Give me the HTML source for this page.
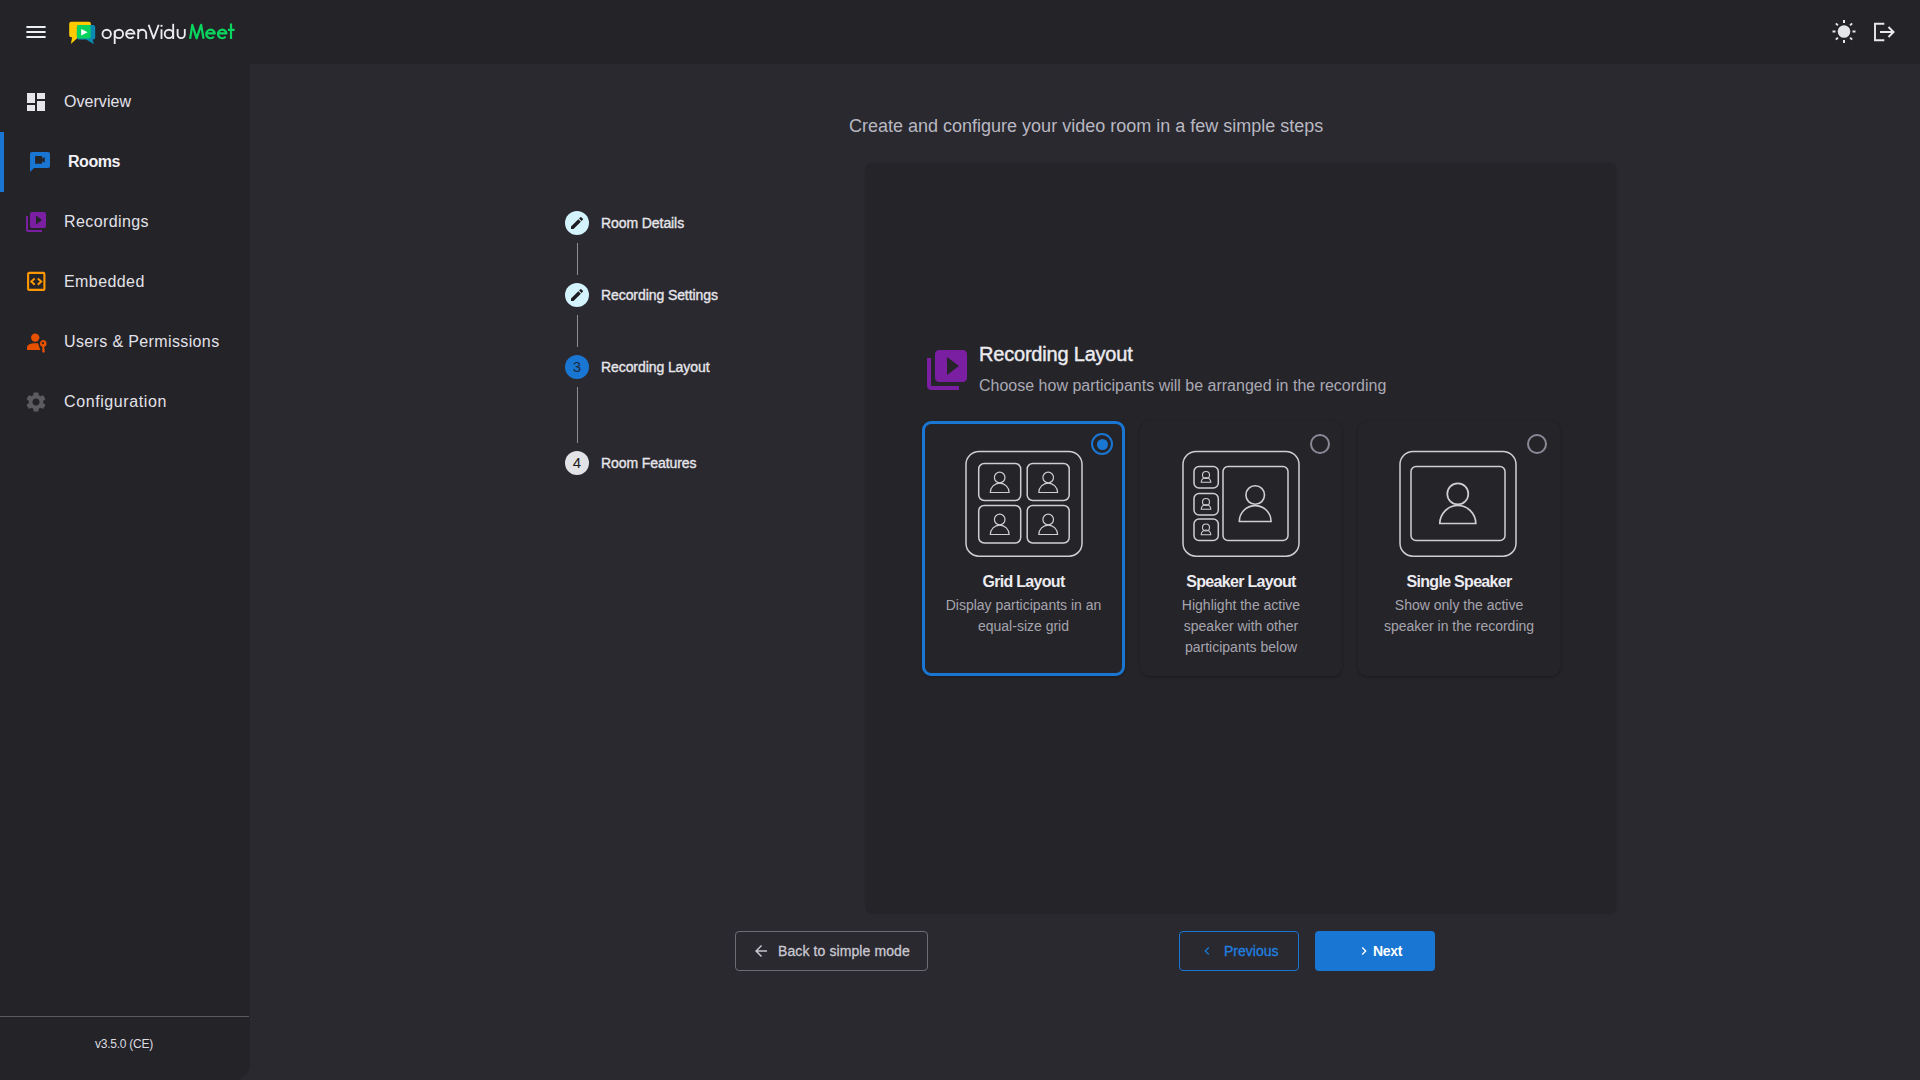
<!DOCTYPE html>
<html><head><meta charset="utf-8">
<style>
*{box-sizing:border-box;margin:0;padding:0}
html,body{width:1920px;height:1080px;overflow:hidden}
body{background:#2a292f;font-family:"Liberation Sans",sans-serif;position:relative;color:#e6e5ea}
.abs{position:absolute}
.t{position:absolute;white-space:nowrap;line-height:20px}
#hdr{left:0;top:0;width:1920px;height:64px;background:#242328}
#side{left:0;top:64px;width:250px;height:1016px;background:#242328;border-bottom-right-radius:16px}
.nav{font-size:16px;color:#e3e2e8}
.card{position:absolute;background:#252429;border-radius:6px;box-shadow:0 1px 3px rgba(0,0,0,.25)}
.opt{position:absolute;top:421px;height:255px;border-radius:9px;background:#252429;box-shadow:0 1px 3px rgba(0,0,0,.3)}
.opt.sel{border:3px solid #1976d2}
.radio{position:absolute;width:20px;height:20px;border-radius:50%;border:2px solid #8a8996}
.otitle{font-size:16px;font-weight:bold;color:#ecebf0;text-align:center;letter-spacing:-0.7px}
.odesc{font-size:14px;color:#a5a4ae;text-align:center;line-height:21px}
.step{font-size:14px;font-weight:normal;color:#e6e5ea;letter-spacing:-0.08px;-webkit-text-stroke:0.35px #e6e5ea}
.sc{position:absolute;width:24px;height:24px;border-radius:50%;left:565px}
.sline{position:absolute;left:577px;width:1px;background:#8c8f93}
.btn{position:absolute;top:931px;height:40px;border-radius:4px}
</style></head>
<body>
<!-- header -->
<div id="hdr" class="abs">
  <svg class="abs" style="left:24px;top:20px" width="24" height="24" viewBox="0 0 24 24"><path fill="#eaeef2" d="M2.4 18h19.2v-2H2.4v2zm0-5h19.2v-2H2.4v2zm0-7v2h19.2V6H2.4z"/></svg>
  <!-- logo -->
  <svg class="abs" style="left:0;top:0" width="100" height="64" viewBox="0 0 100 64">
    <path fill="#ffcb00" d="M71.2 21.8H88.9a2 2 0 0 1 2 2V35.2a2 2 0 0 1-2 2H78.3L70.9 43.9L72.1 37.2H71.2a2 2 0 0 1-2-2V23.8a2 2 0 0 1 2-2z"/>
    <path fill="#0a89b2" d="M78.9 25.1H93.2a2 2 0 0 1 2 2V37.5a2 2 0 0 1-2 2H92.6L93.9 44.2L86.2 39.5H78.9a2 2 0 0 1-2-2V27.1a2 2 0 0 1 2-2z"/>
    <rect x="76.9" y="25.1" width="13.7" height="13.4" rx="2" fill="#06d35c"/>
    <path fill="#ffffff" d="M81.2 29.1L87.6 32.35L81.2 35.6z"/>
  </svg>
  <svg class="abs" style="left:0;top:0" width="250" height="64" viewBox="0 0 250 64" fill="none" stroke-linecap="butt">
    <g stroke="#ececee" stroke-width="1.85">
      <circle cx="106.7" cy="33.9" r="4.2"/>
      <circle cx="118.9" cy="33.9" r="4.2"/><path d="M114.7 30.5V44"/>
      <path d="M126.3 33.6H134.5A4.2 4.2 0 1 0 133.6 36.6"/>
      <path d="M138.2 29V39M138.2 33.7A4 4 0 0 1 146.2 33.7V39"/>
      <path d="M148.6 24.7L153.6 38.4L158.7 24.7" stroke-linejoin="round"/>
      <path d="M161.5 29.3V39"/>
      <circle cx="168.9" cy="33.9" r="4.2"/><path d="M173.2 23.8V39"/>
      <path d="M177.6 29V34.6A3.6 3.6 0 0 0 184.8 34.6V29"/>
    </g>
    <circle cx="161.5" cy="25.8" r="1.15" fill="#ececee"/>
    <g stroke="#0ad65f" stroke-width="2.2" stroke-linejoin="round">
      <path d="M190.1 38.8L192.3 24.8L196.6 38.3L201.1 24.8L203.6 38.8"/>
      <path d="M206.5 33.4H214.8A4.3 4.3 0 1 0 213.9 36.6"/>
      <path d="M218.2 33.4H226.5A4.3 4.3 0 1 0 225.6 36.6"/>
      <path d="M231 23.5V39M227.9 29.8H234.6"/>
    </g>
  </svg>
  <!-- sun -->
  <svg class="abs" style="left:1832px;top:20px" width="24" height="24" viewBox="0 0 24 24">
    <circle cx="12" cy="11.5" r="6.3" fill="#e3e5e8"/>
    <g stroke="#e3e5e8" stroke-width="2" stroke-linecap="butt">
      <path d="M12 0v3M12 20v3M0.5 11.5h3M20.5 11.5h3M3.9 3.4l2 2M18.1 17.6l2 2M3.9 19.6l2-2M18.1 5.4l2-2"/>
    </g>
  </svg>
  <!-- logout -->
  <svg class="abs" style="left:1872px;top:20px" width="24" height="24" viewBox="0 0 24 24">
    <path fill="none" stroke="#e8e9ec" stroke-width="1.9" d="M12.3 3.7H3v16.6h9.3"/>
    <path fill="none" stroke="#e8e9ec" stroke-width="2" d="M8 12h13M16.5 7l5 5-5 5"/>
  </svg>
</div>

<!-- sidebar -->
<div id="side" class="abs">
  <div class="abs" style="left:0;top:1016px"></div>
</div>
<div class="abs" style="left:0;top:132px;width:4px;height:60px;background:#1976d2"></div>
<!-- nav icons -->
<svg class="abs" style="left:24px;top:90px" width="24" height="24" viewBox="0 0 24 24"><path fill="#e6e6ea" d="M3 13h8V3H3v10zm0 8h8v-6H3v6zm10 0h8V11h-8v10zm0-18v6h8V3h-8z"/></svg>
<svg class="abs" style="left:28px;top:150px" width="24" height="24" viewBox="0 0 24 24"><path fill="#1976d2" fill-rule="evenodd" d="M4 2h16a2 2 0 0 1 2 2v12a2 2 0 0 1-2 2H6l-4 4V4a2 2 0 0 1 2-2zM7.1 6v7.8h7v-2.6l2.6 1.6V7.1l-2.6 1.5V6z"/></svg>
<svg class="abs" style="left:24px;top:210px" width="24" height="24" viewBox="0 0 24 24"><path fill="#7b1fa2" d="M4 6H2v14c0 1.1.9 2 2 2h14v-2H4V6zm16-4H8c-1.1 0-2 .9-2 2v12c0 1.1.9 2 2 2h12c1.1 0 2-.9 2-2V4c0-1.1-.9-2-2-2zm-8 12.5v-9l6 4.5-6 4.5z"/></svg>
<svg class="abs" style="left:24px;top:269px" width="24" height="24" viewBox="0 0 24 24">
  <rect x="4.1" y="3.9" width="16.3" height="17" rx="1" fill="none" stroke="#ff9800" stroke-width="2.1"/>
  <path fill="none" stroke="#ff9800" stroke-width="2" d="M10.7 9.4L7.3 12.55L10.7 15.7M13.8 9.4L17.2 12.55L13.8 15.7"/>
</svg>
<svg class="abs" style="left:24px;top:330px" width="24" height="24" viewBox="0 0 24 24">
  <circle cx="11.2" cy="7.6" r="4.2" fill="#e65100"/>
  <path fill="#e65100" d="M3 19.9v-2.6c0-2.5 3-4.1 8.5-4.1 0.8 0 1.6 0 2.5.1l2.3 6.6z"/>
  <path fill="#e65100" fill-rule="evenodd" d="M18.9 10.1a3.5 3.5 0 0 1 1.3 6.8v1.5l.9.9-.9.9.9 1.1-1.5 1.6-1.3-1.1v-4.9a3.5 3.5 0 0 1 .6-6.8zM18.9 11.9a1.1 1.1 0 1 0 .01 0z"/>
</svg>
<svg class="abs" style="left:24px;top:390px" width="24" height="24" viewBox="0 0 24 24"><path fill="#5c5c5e" d="M19.14 12.94c.04-.3.06-.61.06-.94 0-.32-.02-.64-.07-.94l2.03-1.58c.18-.14.23-.41.12-.61l-1.92-3.32c-.12-.22-.37-.29-.59-.22l-2.39.96c-.5-.38-1.030-.7-1.62-.94l-.36-2.54c-.04-.24-.24-.41-.48-.41h-3.84c-.24 0-.43.17-.47.41l-.36 2.54c-.59.24-1.13.57-1.62.94l-2.39-.96c-.22-.08-.47 0-.59.22L2.74 8.87c-.12.21-.08.47.12.61l2.03 1.58c-.05.3-.09.63-.09.94s.02.64.07.94l-2.030 1.58c-.18.14-.23.41-.12.61l1.92 3.32c.12.22.37.29.59.22l2.39-.96c.5.38 1.03.7 1.62.94l.36 2.54c.05.24.24.41.48.41h3.84c.24 0 .44-.17.47-.41l.36-2.54c.59-.24 1.13-.56 1.62-.94l2.39.96c.22.08.47 0 .59-.22l1.92-3.32c.12-.22.07-.47-.12-.61l-2.01-1.58zM12 15.6c-1.98 0-3.6-1.62-3.6-3.6s1.62-3.6 3.6-3.6 3.6 1.62 3.6 3.6-1.62 3.6-3.6 3.6z"/></svg>
<!-- nav texts -->
<div class="t nav" style="left:64px;top:92px;letter-spacing:0.05px">Overview</div>
<div class="t nav" style="left:68px;top:152px;font-weight:bold;color:#f2f1f6;letter-spacing:-0.45px">Rooms</div>
<div class="t nav" style="left:64px;top:212px;letter-spacing:0.4px">Recordings</div>
<div class="t nav" style="left:64px;top:272px;letter-spacing:0.42px">Embedded</div>
<div class="t nav" style="left:64px;top:332px;letter-spacing:0.37px">Users &amp; Permissions</div>
<div class="t nav" style="left:64px;top:392px;letter-spacing:0.6px">Configuration</div>
<div class="abs" style="left:0;top:1016px;width:249px;height:1px;background:#5a5960"></div>
<div class="t" style="left:95px;top:1036px;font-size:12px;line-height:16px;color:#dcdbe0;letter-spacing:-0.25px">v3.5.0 (CE)</div>

<!-- main subtitle -->
<div class="t" style="left:849px;top:115px;font-size:18px;line-height:22px;color:#b9b8c2">Create and configure your video room in a few simple steps</div>

<!-- stepper -->
<div class="sc" style="top:211px;background:#d3f3fd"></div>
<svg class="abs" style="left:569px;top:215px" width="16" height="16" viewBox="0 0 24 24"><path fill="#1d1b20" d="M3 17.25V21h3.75L17.81 9.94l-3.75-3.75L3 17.25zM20.71 7.04a1 1 0 0 0 0-1.41l-2.34-2.34a1 1 0 0 0-1.41 0l-1.83 1.83 3.75 3.75 1.83-1.83z"/></svg>
<div class="sline" style="top:243px;height:32px"></div>
<div class="sc" style="top:283px;background:#d3f3fd"></div>
<svg class="abs" style="left:569px;top:287px" width="16" height="16" viewBox="0 0 24 24"><path fill="#1d1b20" d="M3 17.25V21h3.75L17.81 9.94l-3.75-3.75L3 17.25zM20.71 7.04a1 1 0 0 0 0-1.41l-2.34-2.34a1 1 0 0 0-1.41 0l-1.83 1.83 3.75 3.75 1.83-1.83z"/></svg>
<div class="sline" style="top:315px;height:32px"></div>
<div class="sc" style="top:355px;background:#1976d2;color:#1d2a3a;font-size:15px;line-height:24px;text-align:center">3</div>
<div class="sline" style="top:387px;height:56px"></div>
<div class="sc" style="top:451px;background:#e1e3e6;color:#1d1b20;font-size:15px;line-height:24px;text-align:center">4</div>
<div class="t step" style="left:601px;top:213px">Room Details</div>
<div class="t step" style="left:601px;top:285px">Recording Settings</div>
<div class="t step" style="left:601px;top:357px">Recording Layout</div>
<div class="t step" style="left:601px;top:453px">Room Features</div>

<!-- main card -->
<div class="card" style="left:866px;top:163px;width:750px;height:749px"></div>
<svg class="abs" style="left:923px;top:346px" width="48" height="48" viewBox="0 0 24 24"><path fill="#7b1fa2" d="M4 6H2v14c0 1.1.9 2 2 2h14v-2H4V6zm16-4H8c-1.1 0-2 .9-2 2v12c0 1.1.9 2 2 2h12c1.1 0 2-.9 2-2V4c0-1.1-.9-2-2-2zm-8 12.5v-9l6 4.5-6 4.5z"/></svg>
<div class="t" style="left:979px;top:343px;font-size:20px;line-height:22px;color:#ecebf0;letter-spacing:-0.2px;-webkit-text-stroke:0.4px #ecebf0">Recording Layout</div>
<div class="t" style="left:979px;top:376px;font-size:16px;line-height:20px;color:#aaa9b4">Choose how participants will be arranged in the recording</div>

<!-- options -->
<div class="opt sel" style="left:922px;width:203px"></div>
<div class="opt" style="left:1140px;width:202px"></div>
<div class="opt" style="left:1358px;width:202px"></div>

<div class="radio" style="left:1091px;top:433px;width:22px;height:22px;border-color:#1976d2;border-width:2.3px"></div>
<div class="abs" style="left:1096.5px;top:438.5px;width:11px;height:11px;border-radius:50%;background:#1976d2"></div>
<div class="radio" style="left:1310px;top:434px"></div>
<div class="radio" style="left:1527px;top:434px"></div>

<!-- grid icon -->
<svg class="abs" style="left:964px;top:450px" width="120" height="108" viewBox="0 0 120 108" fill="none" stroke="#cfcfd2" stroke-width="1.5">
  <rect x="2" y="1.5" width="116" height="104.7" rx="13"/>
  <rect x="14.7" y="13.5" width="42" height="37" rx="5.5"/>
  <rect x="63.2" y="13.5" width="42" height="37" rx="5.5"/>
  <rect x="14.7" y="55.5" width="42" height="37.5" rx="5.5"/>
  <rect x="63.2" y="55.5" width="42" height="37.5" rx="5.5"/>
  <g stroke-width="1.2">
  <circle cx="35.7" cy="27.5" r="5.3"/><path d="M26.3 42.5a9.4 9.4 0 0 1 18.8 0z"/>
  <circle cx="84.2" cy="27.5" r="5.3"/><path d="M74.8 42.5a9.4 9.4 0 0 1 18.8 0z"/>
  <circle cx="35.7" cy="69.5" r="5.3"/><path d="M26.3 84.5a9.4 9.4 0 0 1 18.8 0z"/>
  <circle cx="84.2" cy="69.5" r="5.3"/><path d="M74.8 84.5a9.4 9.4 0 0 1 18.8 0z"/>
  </g>
</svg>
<!-- speaker icon -->
<svg class="abs" style="left:1181px;top:450px" width="120" height="108" viewBox="0 0 120 108" fill="none" stroke="#cfcfd2" stroke-width="1.5">
  <rect x="2" y="1.5" width="116" height="104.7" rx="13"/>
  <rect x="13" y="16.5" width="24.3" height="21.5" rx="5"/>
  <rect x="13" y="43.5" width="24.3" height="21.5" rx="5"/>
  <rect x="13" y="69" width="24.3" height="21.5" rx="5"/>
  <rect x="42" y="16.5" width="65" height="74" rx="5"/>
  <g stroke-width="1.1">
  <circle cx="25" cy="25" r="3.5"/><path d="M20.2 32.3a4.8 4.8 0 0 1 9.6 0z"/>
  <circle cx="25" cy="52" r="3.5"/><path d="M20.2 59.3a4.8 4.8 0 0 1 9.6 0z"/>
  <circle cx="25" cy="77.5" r="3.5"/><path d="M20.2 84.8a4.8 4.8 0 0 1 9.6 0z"/>
  </g>
  <g stroke-width="1.6">
  <circle cx="74.2" cy="45" r="9.3"/><path d="M58.3 71.5a15.9 15.9 0 0 1 31.8 0z"/>
  </g>
</svg>
<!-- single icon -->
<svg class="abs" style="left:1398px;top:450px" width="120" height="108" viewBox="0 0 120 108" fill="none" stroke="#cfcfd2" stroke-width="1.5">
  <rect x="2" y="1.5" width="116" height="104.7" rx="13"/>
  <rect x="13" y="16.5" width="94" height="74" rx="5"/>
  <g stroke-width="1.7">
  <circle cx="59.8" cy="43.9" r="10.5"/><path d="M41.8 73.5a18 18 0 0 1 36 0z"/>
  </g>
</svg>

<div class="t otitle" style="left:922px;width:203px;top:572px">Grid Layout</div>
<div class="t odesc" style="left:922px;width:203px;top:595px;white-space:normal">Display participants in an<br>equal-size grid</div>
<div class="t otitle" style="left:1140px;width:202px;top:572px">Speaker Layout</div>
<div class="t odesc" style="left:1140px;width:202px;top:595px;white-space:normal">Highlight the active<br>speaker with other<br>participants below</div>
<div class="t otitle" style="left:1358px;width:202px;top:572px">Single Speaker</div>
<div class="t odesc" style="left:1358px;width:202px;top:595px;white-space:normal">Show only the active<br>speaker in the recording</div>

<!-- buttons -->
<div class="btn" style="left:735px;width:193px;border:1px solid #6d6c76"></div>
<svg class="abs" style="left:752px;top:942px" width="18" height="18" viewBox="0 0 24 24"><path fill="#c5c4cf" d="M20 11H7.83l5.59-5.59L12 4l-8 8 8 8 1.41-1.41L7.83 13H20v-2z"/></svg>
<div class="t" style="left:778px;top:941px;font-size:14px;color:#c9c8d2;letter-spacing:0.1px;-webkit-text-stroke:0.3px #c9c8d2">Back to simple mode</div>

<div class="btn" style="left:1179px;width:120px;border:1px solid #1976d2"></div>
<svg class="abs" style="left:1199px;top:943px" width="16" height="16" viewBox="0 0 24 24"><path fill="#1976d2" d="M15.41 7.41L14 6l-6 6 6 6 1.41-1.41L10.83 12z"/></svg>
<div class="t" style="left:1224px;top:941px;font-size:14px;color:#1f80e0;-webkit-text-stroke:0.3px #1f80e0">Previous</div>

<div class="btn" style="left:1315px;width:120px;background:#1976d2"></div>
<svg class="abs" style="left:1356px;top:943px" width="16" height="16" viewBox="0 0 24 24"><path fill="#ffffff" d="M8.59 16.59L10 18l6-6-6-6-1.41 1.41L13.17 12z"/></svg>
<div class="t" style="left:1373px;top:941px;font-size:14px;font-weight:bold;color:#ffffff;letter-spacing:-0.3px">Next</div>
</body></html>
